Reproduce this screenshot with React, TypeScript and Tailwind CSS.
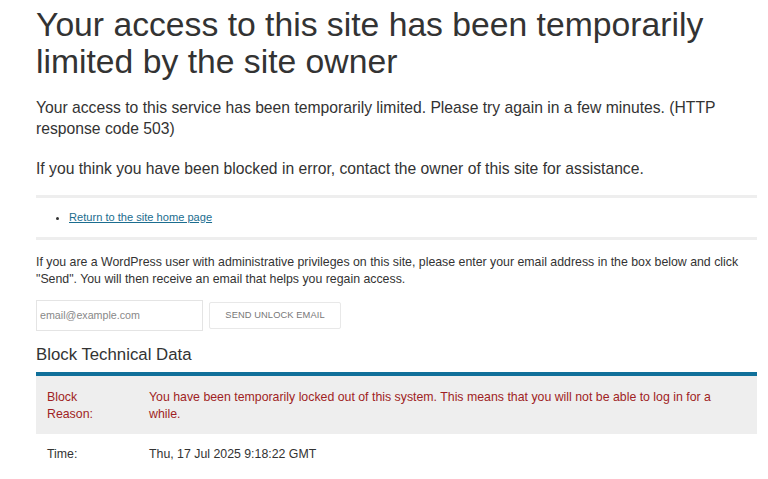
import React from "react";

export default function App() {
  return (
    <div className="w-[768px] h-[479px] overflow-hidden bg-white text-[#333333]" style={{ fontFamily: '"Liberation Sans", Arial, sans-serif' }}>
      <div className="pl-[36px] pr-[11px]">
        <h1 className="text-[33.7px] leading-[37px] font-normal text-[#333] pt-[6px]">
          Your access to this site has been temporarily limited by the site owner
        </h1>
        <p className="mt-[17px] text-[15.7px] leading-[21px] text-[#333]">
          Your access to this service has been temporarily limited. Please try again in a few minutes. (HTTP response code 503)
        </p>
        <p className="mt-[19px] text-[15.7px] leading-[21px] text-[#333]">
          If you think you have been blocked in error, contact the owner of this site for assistance.
        </p>
        <div className="mt-[16px] h-[3px] bg-[#eeeeee]" />
        <ul className="pl-[33px] py-[12px] list-disc text-[11.1px] leading-[15px]">
          <li className="marker:text-[#333]">
            <a href="#" className="text-[#1b6d8f] underline">Return to the site home page</a>
          </li>
        </ul>
        <div className="h-[3px] bg-[#eeeeee]" />
        <p className="mt-[14px] text-[12.33px] leading-[17px] text-[#333]">
          If you are a WordPress user with administrative privileges on this site, please enter your email address in the box below and click "Send". You will then receive an email that helps you regain access.
        </p>
        <div className="mt-[12px] flex items-center gap-[6px]">
          <div className="w-[167px] h-[31px] border border-[#e4e4e4] flex items-center pl-[3px] text-[10.7px] text-[#888]">
            email@example.com
          </div>
          <div className="w-[132px] h-[27px] border border-[#e8e8e8] rounded-[2px] flex items-center justify-center text-[9.3px] text-[#777] tracking-[0.1px]">
            SEND UNLOCK EMAIL
          </div>
        </div>
        <h2 className="mt-[12px] text-[16.8px] leading-[24px] font-normal text-[#333]">Block Technical Data</h2>
        <div className="mt-[5px] h-[4px] bg-[#10709a]" />
        <div className="bg-[#eeeeee] flex px-[11px] pt-[13px] pb-[11px] text-[12.33px] leading-[17px] text-[#a01e24]">
          <div className="w-[102px] shrink-0">Block<br />Reason:</div>
          <div className="pr-[30px]">You have been temporarily locked out of this system. This means that you will not be able to log in for a while.</div>
        </div>
        <div className="flex px-[11px] pt-[12px] text-[12.33px] leading-[17px] text-[#333]">
          <div className="w-[102px] shrink-0">Time:</div>
          <div>Thu, 17 Jul 2025 9:18:22 GMT</div>
        </div>
      </div>
    </div>
  );
}
